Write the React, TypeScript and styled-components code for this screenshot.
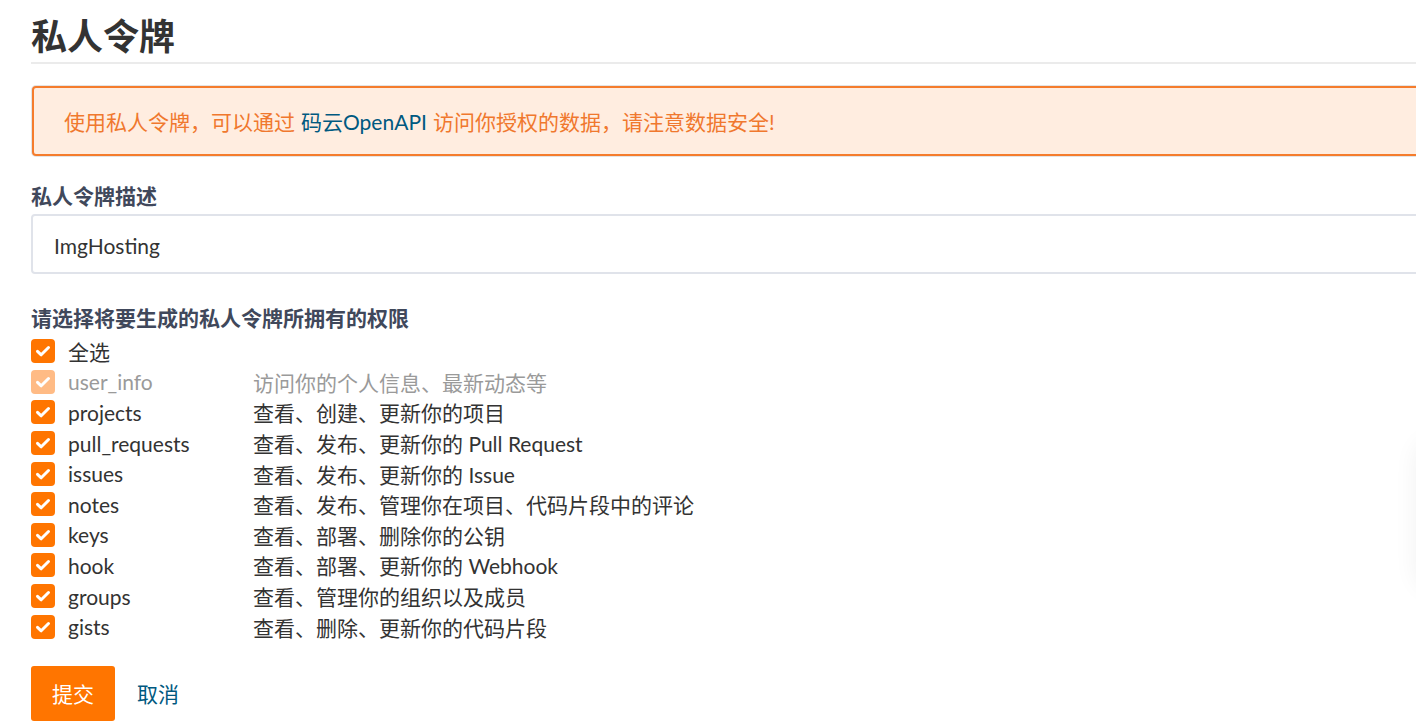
import React from "react";
import styled, { createGlobalStyle } from "styled-components";

const Global = createGlobalStyle`
  html, body { margin: 0; padding: 0; background: #fff; overflow: hidden; }
  body { font-family: Lato, "Noto Sans CJK SC", sans-serif; }
  * { box-sizing: border-box; }
`;

const Page = styled.div`
  width: 1460px;
  padding-left: 31px;
  display: flex;
  flex-direction: column;
`;

const Header = styled.div`
  padding-top: 12px;
  padding-bottom: 6px;
  border-bottom: 2px solid #ebebeb;
`;

const Title = styled.h1`
  margin: 0;
  font-size: 36px;
  line-height: 44px;
  font-weight: 700;
  color: #333;
  font-family: "Noto Sans CJK SC", sans-serif;
`;

const Alert = styled.div`
  margin-top: 22px;
  margin-left: 1px;
  height: 70px;
  display: flex;
  align-items: center;
  padding-left: 30px;
  padding-top: 2px;
  background: #ffede0;
  border: 2px solid #f57c2c;
  border-radius: 4px;
  box-shadow: 0 0 0 1px #e4e4e4;
  font-size: 21px;
  line-height: 30px;
  color: #f0782e;
`;

const Link = styled.a`
  color: #005980;
  text-decoration: none;
  margin-left: 6px;
  margin-right: 6px;
`;

const Label = styled.div<{ $top: number }>`
  margin-top: ${(p) => p.$top}px;
  font-size: 21px;
  line-height: 30px;
  font-weight: 700;
  color: #40485b;
`;

const Input = styled.div`
  margin-top: 3px;
  height: 60px;
  border: 2px solid #e0e3ea;
  border-radius: 4px;
  display: flex;
  align-items: center;
  padding-left: 21px;
  padding-top: 2px;
  font-size: 21px;
  color: #333;
`;

const List = styled.div`
  margin-top: 3px;
  display: flex;
  flex-direction: column;
`;

const Row = styled.div<{ $disabled?: boolean }>`
  height: 30.6px;
  display: flex;
  align-items: center;
  font-size: 21px;
  color: ${(p) => (p.$disabled ? "#9a9a9a" : "#333")};
`;

const Box = styled.span<{ $disabled?: boolean }>`
  width: 24px;
  height: 24px;
  border-radius: 4px;
  background: ${(p) => (p.$disabled ? "#ffbb85" : "#ff7500")};
  display: flex;
  align-items: center;
  justify-content: center;
  flex-shrink: 0;
`;

const Name = styled.span`
  width: 185px;
  margin-left: 13px;
  white-space: nowrap;
`;

const Desc = styled.span`
  white-space: nowrap;
`;

const Actions = styled.div`
  margin-top: 24px;
  display: flex;
  align-items: center;
`;

const Submit = styled.button`
  width: 84px;
  height: 55px;
  border: none;
  border-radius: 3px;
  background: #ff7500;
  color: #fff;
  font-size: 21px;
  font-family: inherit;
  padding: 0;
`;

const Cancel = styled.a`
  margin-left: 22px;
  color: #005980;
  font-size: 21px;
`;

const Shade = styled.div`
  position: fixed;
  right: -40px;
  top: 440px;
  width: 40px;
  height: 150px;
  border-radius: 20px;
  box-shadow: 0 0 24px rgba(0, 0, 0, 0.06);
`;

const Check = () => (
  <svg width="16" height="16" viewBox="0 0 16 16">
    <path d="M2.5 8.3 L6.2 11.8 L13.5 4.5" fill="none" stroke="#fff" strokeWidth="3" strokeLinecap="round" strokeLinejoin="round" />
  </svg>
);

const perms: { name: string; desc: string; disabled?: boolean }[] = [
  { name: "user_info", desc: "访问你的个人信息、最新动态等", disabled: true },
  { name: "projects", desc: "查看、创建、更新你的项目" },
  { name: "pull_requests", desc: "查看、发布、更新你的 Pull Request" },
  { name: "issues", desc: "查看、发布、更新你的 Issue" },
  { name: "notes", desc: "查看、发布、管理你在项目、代码片段中的评论" },
  { name: "keys", desc: "查看、部署、删除你的公钥" },
  { name: "hook", desc: "查看、部署、更新你的 Webhook" },
  { name: "groups", desc: "查看、管理你的组织以及成员" },
  { name: "gists", desc: "查看、删除、更新你的代码片段" },
];

export default function App() {
  return (
    <>
      <Global />
      <Page>
        <Header>
          <Title>私人令牌</Title>
        </Header>
        <Alert>
          使用私人令牌，可以通过<Link>码云OpenAPI</Link>访问你授权的数据，请注意数据安全!
        </Alert>
        <Label $top={25}>私人令牌描述</Label>
        <Input>ImgHosting</Input>
        <Label $top={29}>请选择将要生成的私人令牌所拥有的权限</Label>
        <List>
          <Row>
            <Box><Check /></Box>
            <Name>全选</Name>
          </Row>
          {perms.map((p) => (
            <Row key={p.name} $disabled={p.disabled}>
              <Box $disabled={p.disabled}><Check /></Box>
              <Name>{p.name}</Name>
              <Desc>{p.desc}</Desc>
            </Row>
          ))}
        </List>
        <Actions>
          <Submit>提交</Submit>
          <Cancel>取消</Cancel>
        </Actions>
      </Page>
      <Shade />
    </>
  );
}
